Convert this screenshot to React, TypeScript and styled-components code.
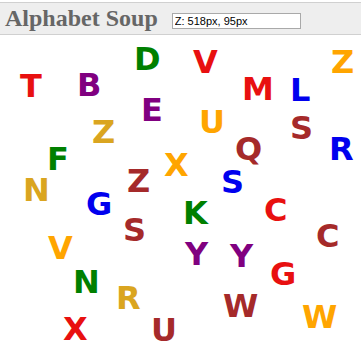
import React from "react";
import styled, { createGlobalStyle } from "styled-components";

const Global = createGlobalStyle`
  html, body { margin: 0; padding: 0; background: #fff; }
  body { width: 361px; height: 350px; overflow: hidden; }
`;

const Page = styled.div`
  display: flex;
  flex-direction: column;
  width: 361px;
  height: 350px;
`;

const Header = styled.header`
  margin-top: 2px;
  height: 31px;
  background: #eeeeee;
  border-top: 1px solid #d0d0d0;
  border-bottom: 1px solid #d0d0d0;
  display: flex;
  align-items: flex-start;
  padding-left: 5px;
  gap: 14px;
`;

const Title = styled.h1`
  margin: 2px 0 0 0;
  font-family: "Liberation Serif", "Times New Roman", serif;
  font-weight: bold;
  font-size: 24px;
  line-height: 26px;
  color: #666666;
  white-space: nowrap;
`;

const Coords = styled.input`
  margin-top: 10px;
  box-sizing: border-box;
  width: 129px;
  height: 16px;
  padding: 0 2px;
  border: 1px solid #a9a9a9;
  background: #fff;
  font-family: "Liberation Sans", Arial, sans-serif;
  font-size: 11px;
  color: #000;
  outline: none;
`;

const Canvas = styled.div`
  position: relative;
  flex: 1;
  overflow: hidden;
`;

const Letter = styled.span<{ $x: number; $y: number; $c: string }>`
  position: absolute;
  left: ${(p) => p.$x}px;
  top: ${(p) => p.$y}px;
  color: ${(p) => p.$c};
  font-family: "DejaVu Sans", Verdana, sans-serif;
  font-weight: bold;
  font-size: 32px;
  line-height: 1;
  user-select: none;
`;

const red = "#e81010";
const purple = "#800080";
const green = "#008000";
const orange = "#ffa500";
const goldenrod = "#daa520";
const brown = "#a52a2a";
const blue = "#0000ee";

const lsb: Record<string, number> = {
  T: 0.3, B: 3, D: 3, E: 3, F: 3, K: 3, L: 3, M: 3, N: 3, R: 3, U: 2.7,
  V: 0.3, W: 0.7, X: 0.7, Y: 0.2, Z: 1.5, S: 1.7, C: 1.8, G: 1.8, Q: 1.6,
};

const letters: [string, string, number, number][] = [
  ["T", red, 20, 74],
  ["B", purple, 80, 73],
  ["D", green, 137, 47],
  ["V", red, 193, 50],
  ["M", red, 245, 77],
  ["L", blue, 293, 78],
  ["Z", orange, 332, 50],
  ["E", purple, 144, 98],
  ["U", orange, 202, 110],
  ["Z", goldenrod, 93, 120],
  ["S", brown, 292, 116],
  ["Q", brown, 237, 137],
  ["R", blue, 332, 137],
  ["F", green, 50, 147],
  ["X", orange, 165, 153],
  ["Z", brown, 128, 169],
  ["S", blue, 223, 170],
  ["N", goldenrod, 26, 178],
  ["G", blue, 88, 192],
  ["K", green, 186, 201],
  ["C", red, 266, 198],
  ["S", brown, 125, 218],
  ["C", brown, 318, 224],
  ["V", orange, 48, 236],
  ["Y", purple, 185, 242],
  ["Y", purple, 230, 244],
  ["G", red, 272, 262],
  ["N", green, 76, 270],
  ["R", goldenrod, 119, 286],
  ["W", brown, 224, 294],
  ["W", orange, 303, 305],
  ["X", red, 64, 317],
  ["U", brown, 154, 318],
];

const CANVAS_TOP = 35;
const CAP_OFFSET = 4;

export default function App() {
  return (
    <>
      <Global />
      <Page>
        <Header>
          <Title>Alphabet Soup</Title>
          <Coords type="text" readOnly value="Z: 518px, 95px" />
        </Header>
        <Canvas>
          {letters.map(([ch, c, x, y], i) => (
            <Letter
              key={i}
              $c={c}
              $x={Math.round(x - (lsb[ch] ?? 0))}
              $y={y - CANVAS_TOP - CAP_OFFSET}
            >
              {ch}
            </Letter>
          ))}
        </Canvas>
      </Page>
    </>
  );
}
